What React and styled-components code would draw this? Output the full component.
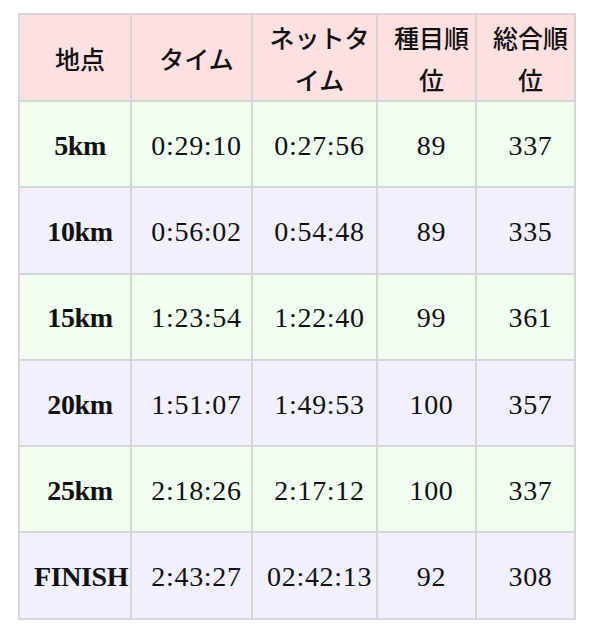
import styled, { createGlobalStyle } from 'styled-components';

const GlobalStyle = createGlobalStyle`
  html, body {
    margin: 0;
    padding: 0;
    background: #ffffff;
  }
`;

const Page = styled.div`
  padding: 13px 18px;
`;

const SplitTable = styled.table`
  border-collapse: collapse;
  table-layout: fixed;
  width: 558px;
  border: 2px solid #d6d6d6;
  color: #111111;
  font-family: "Liberation Serif", "Noto Sans CJK JP", serif;
`;

const HeadCell = styled.th`
  height: 85px;
  padding: 0 4px 0 14px;
  background: #ffe0e0;
  border: 2px solid #d6d6d6;
  font-family: "Noto Sans CJK JP", sans-serif;
  font-size: 25px;
  font-weight: 500;
  line-height: 42px;
  text-align: center;
  vertical-align: middle;
`;

const Row = styled.tr`
  background: ${({ $odd }) => ($odd ? '#f0fff0' : '#f0f0ff')};
`;

const Cell = styled.td`
  height: 81.3px;
  padding: 3px 4px 0 14px;
  border: 2px solid #d6d6d6;
  font-size: 28px;
  font-weight: ${({ $bold }) => ($bold ? 700 : 400)};
  letter-spacing: ${({ $bold }) => ($bold ? '-0.4px' : '0.7px')};
  text-align: center;
  vertical-align: middle;
  white-space: nowrap;
`;

const columns = [
  { label: '地点', width: 112 },
  { label: 'タイム', width: 121 },
  { label: 'ネットタイム', width: 125 },
  { label: '種目順位', width: 99 },
  { label: '総合順位', width: 99 },
];

const splits = [
  ['5km', '0:29:10', '0:27:56', '89', '337'],
  ['10km', '0:56:02', '0:54:48', '89', '335'],
  ['15km', '1:23:54', '1:22:40', '99', '361'],
  ['20km', '1:51:07', '1:49:53', '100', '357'],
  ['25km', '2:18:26', '2:17:12', '100', '337'],
  ['FINISH', '2:43:27', '02:42:13', '92', '308'],
];

const App = () => (
  <>
    <GlobalStyle />
    <Page>
      <SplitTable>
        <colgroup>
          {columns.map((col) => (
            <col key={col.label} style={{ width: col.width }} />
          ))}
        </colgroup>
        <thead>
          <tr>
            {columns.map((col) => (
              <HeadCell key={col.label}>{col.label}</HeadCell>
            ))}
          </tr>
        </thead>
        <tbody>
          {splits.map((row, index) => (
            <Row key={row[0]} $odd={index % 2 === 0}>
              {row.map((value, i) => (
                <Cell key={i} $bold={i === 0}>
                  {value}
                </Cell>
              ))}
            </Row>
          ))}
        </tbody>
      </SplitTable>
    </Page>
  </>
);

export default App;
